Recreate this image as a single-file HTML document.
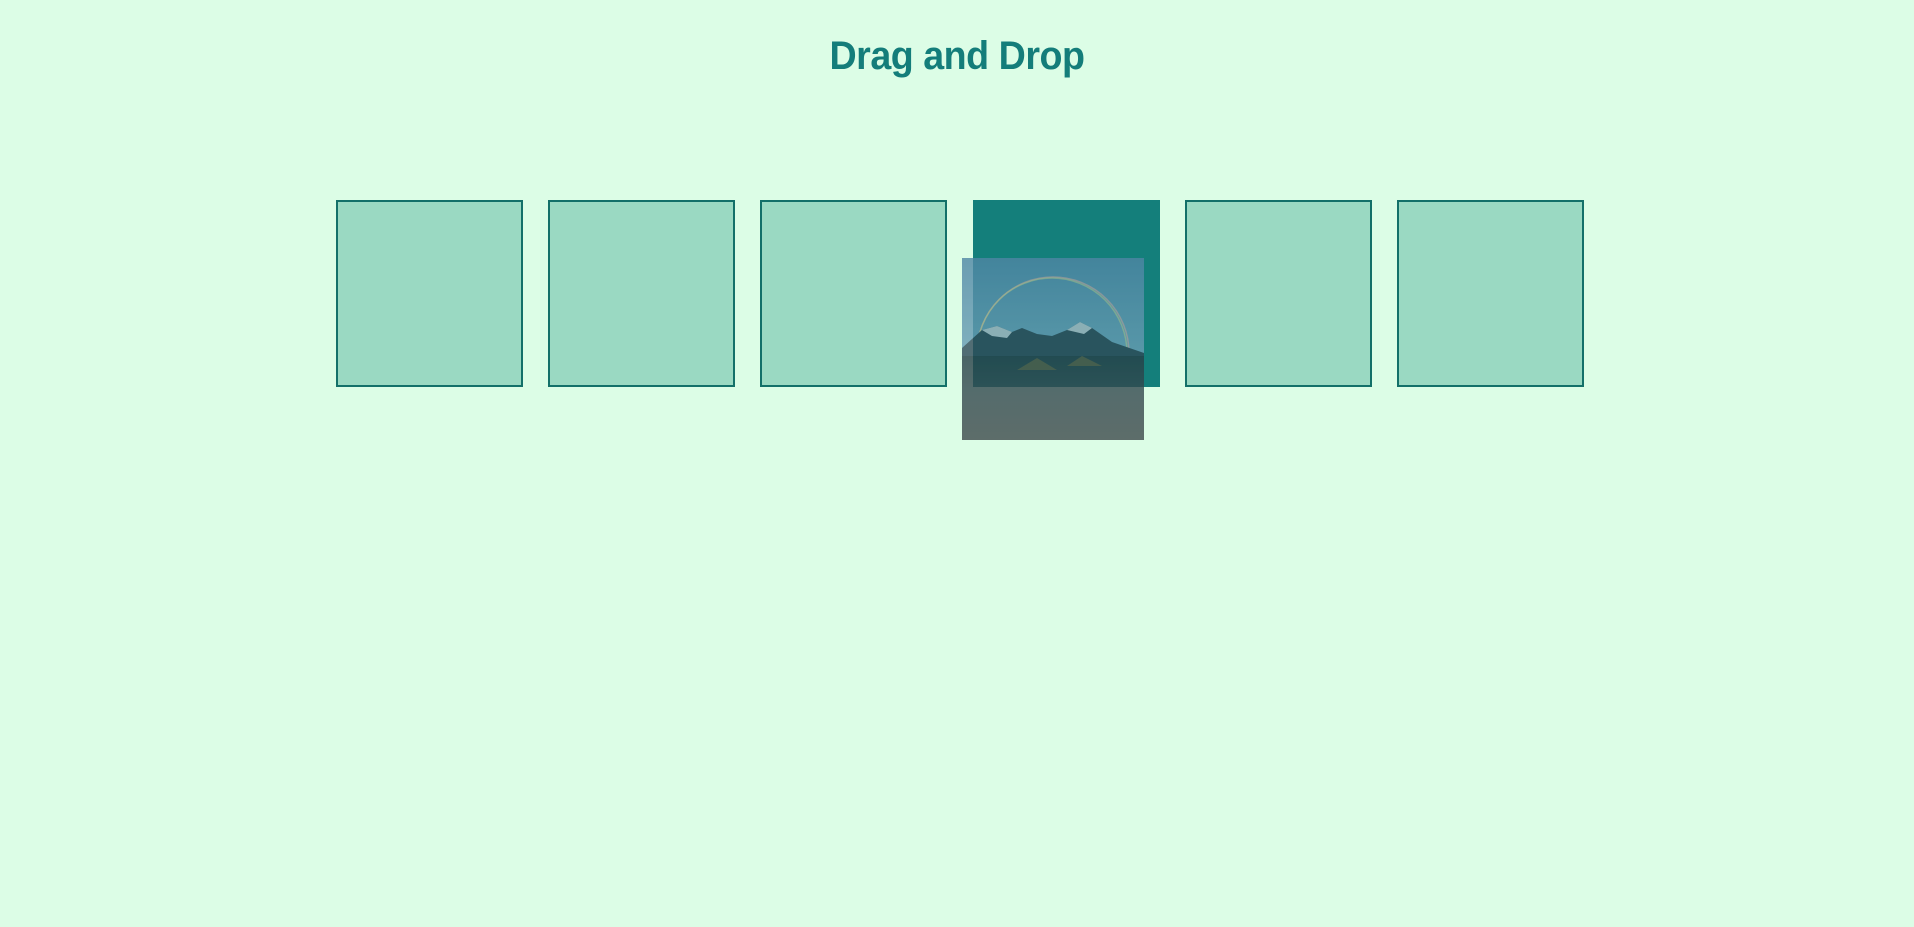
<!DOCTYPE html>
<html><head><style>
html,body{margin:0;padding:0;width:1914px;height:927px;background:#dcfde6;overflow:hidden;font-family:"Liberation Sans",sans-serif}
h1{position:absolute;top:34px;left:0;width:1914px;text-align:center;margin:0;color:#147d7a;font-size:40px;font-weight:bold;letter-spacing:-0.5px;transform:scaleX(.94)}
.b{position:absolute;top:200px;width:183px;height:183px;background:#9ad9c2;border:2px solid #137069}
.f{background:#147f7b;border-color:#147f7b}
.img{position:absolute;left:962px;top:258px;width:182px;height:182px;opacity:.8}
</style></head><body>
<h1>Drag and Drop</h1>
<div class="b" style="left:336px"></div>
<div class="b" style="left:548px"></div>
<div class="b" style="left:760px"></div>
<div class="b f" style="left:973px"></div>
<div class="b" style="left:1185px"></div>
<div class="b" style="left:1397px"></div>
<svg class="img" viewBox="0 0 182 182">
<defs><linearGradient id="s" x1="0" y1="0" x2="0" y2="1"><stop offset="0" stop-color="#4f86a5"/><stop offset="1" stop-color="#6b9fb5"/></linearGradient>
<linearGradient id="g" x1="0" y1="0" x2="0" y2="1"><stop offset="0" stop-color="#263f47"/><stop offset=".4" stop-color="#33484e"/><stop offset="1" stop-color="#3e4a4c"/></linearGradient></defs>
<rect width="182" height="100" fill="url(#s)"/>
<path d="M15 95 A76 76 0 0 1 167 95" fill="none" stroke="#d8a9a0" stroke-width="1.5" opacity=".6"/>
<path d="M15 95 A74 74 0 0 1 165 95" fill="none" stroke="#c9d48a" stroke-width="1.5" opacity=".5"/>
<path d="M0 90 L20 72 L35 68 L50 74 L60 70 L75 76 L90 78 L105 72 L118 64 L130 70 L150 84 L182 95 L182 110 L0 110 Z" fill="#2f4a58"/>
<path d="M20 72 L35 68 L50 74 L45 80 L30 78Z M105 72 L118 64 L130 70 L122 76Z" fill="#c8d8e0" opacity=".8"/>
<rect y="98" width="182" height="84" fill="url(#g)"/>
<path d="M55 112 L75 100 L95 112Z M105 108 L120 98 L140 108Z" fill="#5a5d44" opacity=".8"/>
</svg>
</body></html>
